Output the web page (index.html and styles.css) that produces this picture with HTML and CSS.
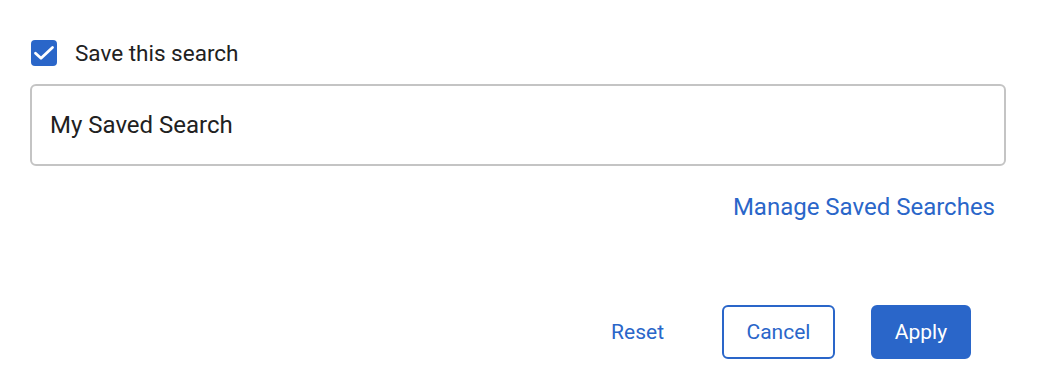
FILE: index.html
```html
<!DOCTYPE html>
<html lang="en">
<head>
<meta charset="UTF-8">
<meta name="viewport" content="width=device-width, initial-scale=1.0">
<title>Save Search</title>
<link rel="stylesheet" href="styles.css">
</head>
<body>
<div class="panel">
  <label class="save-row">
    <span class="check">
      <svg width="22" height="16" viewBox="0 0 22 16"><path d="M2.5 8.2 L8 13.2 L19.5 2.5" fill="none" stroke="#fff" stroke-width="2.8" stroke-linecap="round" stroke-linejoin="round"/></svg>
    </span>
    <span class="save-label">Save this search</span>
  </label>
  <div class="name-input">My Saved Search</div>
  <div class="manage-row">
    <a class="manage-link" href="#">Manage Saved Searches</a>
  </div>
  <div class="actions">
    <button class="btn btn-text">Reset</button>
    <button class="btn btn-outline">Cancel</button>
    <button class="btn btn-primary">Apply</button>
  </div>
</div>
</body>
</html>
```
FILE: styles.css
```css
body {
  font-family: Roboto, 'Liberation Sans', Arial, sans-serif;
  background-color: #fff;
  color: #212121;
  margin: 0;
  padding: 0;
}
.panel {
  width: 976px;
  padding: 40px 0 0 30px;
}
.save-row {
  display: flex;
  align-items: center;
  gap: 18px;
  height: 26px;
  padding-left: 1px;
}
.check {
  width: 26px;
  height: 26px;
  border-radius: 4px;
  background-color: #2a66c9;
  display: flex;
  align-items: center;
  justify-content: center;
}
.save-label {
  font-size: 22.5px;
}
.name-input {
  margin-top: 18px;
  box-sizing: border-box;
  height: 82px;
  border: 2px solid #c4c4c4;
  border-radius: 6px;
  padding: 0 18px;
  display: flex;
  align-items: center;
  font-size: 24px;
}
.manage-row {
  display: flex;
  justify-content: flex-end;
  padding-right: 11px;
  margin-top: 27px;
  line-height: 28px;
}
.manage-link {
  color: #2a66c9;
  font-size: 24px;
  text-decoration: none;
}
.actions {
  display: flex;
  justify-content: flex-end;
  align-items: center;
  margin-top: 84px;
  padding-right: 35px;
}
.btn {
  font-family: inherit;
  font-size: 21px;
  height: 54px;
  border-radius: 6px;
  cursor: pointer;
}
.btn-text {
  background: none;
  border: none;
  color: #2a66c9;
  padding: 0 20px;
  margin-right: 38px;
}
.btn-outline {
  background-color: #fff;
  border: 2px solid #2a66c9;
  color: #2a66c9;
  width: 113px;
  margin-right: 36px;
}
.btn-primary {
  background-color: #2a66c9;
  border: 2px solid #2a66c9;
  color: #fff;
  width: 100px;
}
```
